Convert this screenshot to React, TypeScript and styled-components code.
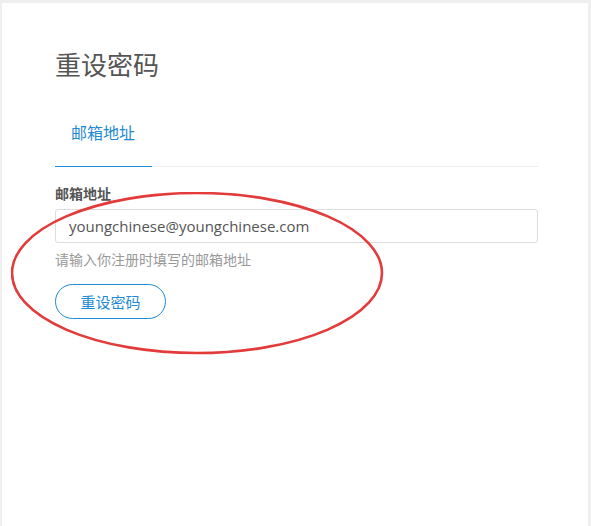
import React from "react";
import styled, { createGlobalStyle } from "styled-components";

const GlobalStyle = createGlobalStyle`
  html, body {
    margin: 0;
    padding: 0;
    background: #efefef;
  }
  body {
    font-family: "Noto Sans CJK SC", "Liberation Sans", sans-serif;
  }
`;

const BLUE = "#1f8ad4";

function App() {
  return (
    <>
      <GlobalStyle />
      <Card>
        <Title>重设密码</Title>
        <Tabs>
          <Tab $active>邮箱地址</Tab>
        </Tabs>
        <Form>
          <Label>邮箱地址</Label>
          <Input defaultValue="youngchinese@youngchinese.com" />
          <Help>请输入你注册时填写的邮箱地址</Help>
          <SubmitButton>重设密码</SubmitButton>
        </Form>
        <Mark viewBox="0 0 380 170" width="380" height="170">
          <ellipse
            cx="186"
            cy="81"
            rx="185"
            ry="80"
            fill="none"
            stroke="#e33a3a"
            strokeWidth="2.6"
          />
        </Mark>
      </Card>
    </>
  );
}

const Card = styled.div`
  position: relative;
  margin: 3px 3px 0 2px;
  min-height: 523px;
  background: #ffffff;
  padding: 41px 50px 0 53px;
  box-sizing: border-box;
`;

const Title = styled.h1`
  margin: 0;
  font-size: 26px;
  line-height: 40px;
  font-weight: 400;
  color: #555555;
`;

const Tabs = styled.div`
  display: flex;
  margin-top: 34px;
  border-bottom: 1px solid #eeeeee;
`;

const Tab = styled.div<{ $active?: boolean }>`
  width: 97px;
  box-sizing: border-box;
  padding: 0 16px 20px;
  font-size: 16px;
  line-height: 28px;
  color: ${({ $active }) => ($active ? BLUE : "#555555")};
  border-bottom: 1px solid ${({ $active }) => ($active ? BLUE : "transparent")};
  margin-bottom: -1px;
`;

const Form = styled.div`
  display: flex;
  flex-direction: column;
  align-items: flex-start;
  padding-top: 15px;
`;

const Label = styled.label`
  font-size: 14px;
  font-weight: 700;
  line-height: 22px;
  color: #555555;
`;

const Input = styled.input`
  margin-top: 5px;
  width: 100%;
  height: 34px;
  box-sizing: border-box;
  padding: 0 13px;
  border: 1px solid #dddddd;
  border-radius: 3px;
  font-family: "Open Sans", "Liberation Sans", sans-serif;
  font-size: 15px;
  color: #555555;
  outline: none;
`;

const Help = styled.div`
  margin-top: 5px;
  font-size: 14px;
  line-height: 22px;
  color: #999999;
`;

const SubmitButton = styled.button`
  margin-top: 14px;
  width: 111px;
  height: 35px;
  border: 1px solid ${BLUE};
  border-radius: 18px;
  background: #ffffff;
  color: ${BLUE};
  font-family: "Noto Sans CJK SC", sans-serif;
  font-size: 15px;
  cursor: pointer;
`;

const Mark = styled.svg`
  position: absolute;
  left: 9px;
  top: 189px;
  pointer-events: none;
`;

export default App;
